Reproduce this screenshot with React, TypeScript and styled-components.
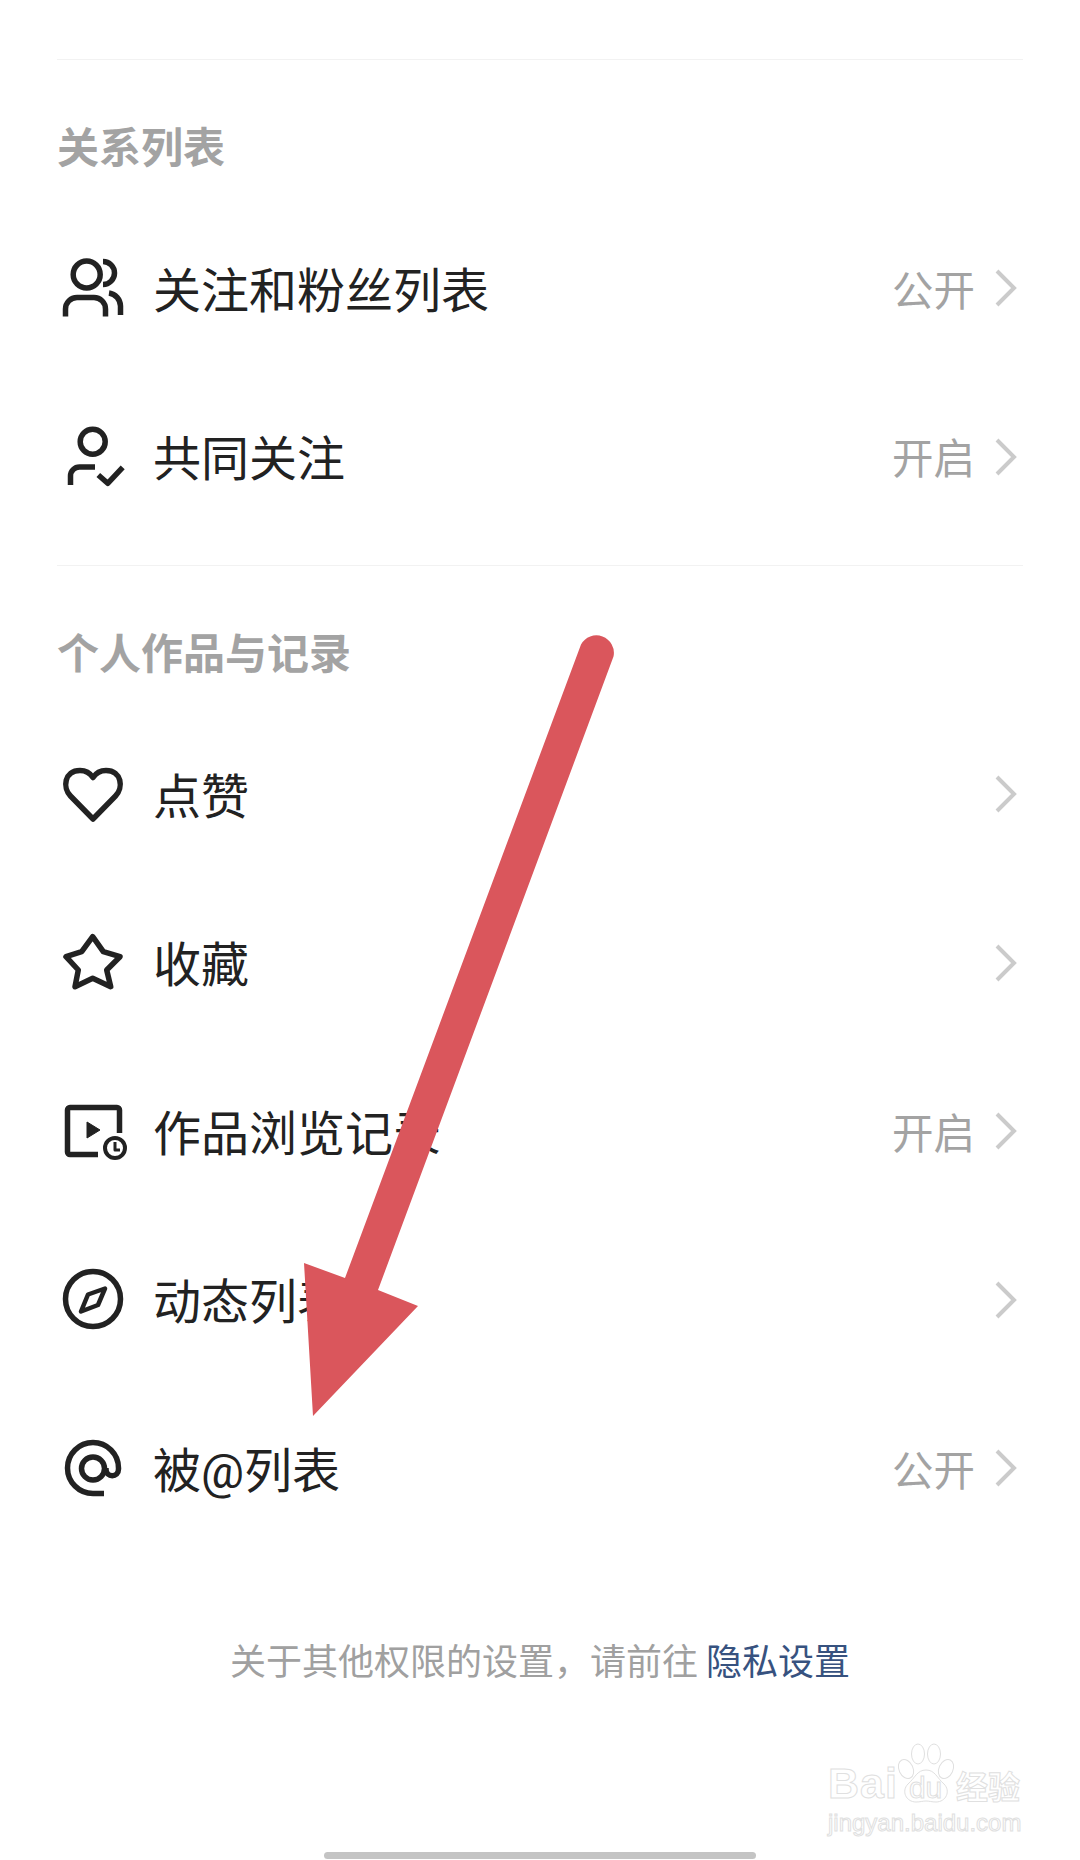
import React from "react";
import styled, { createGlobalStyle } from "styled-components";

const GlobalStyle = createGlobalStyle`
  html, body {
    margin: 0;
    padding: 0;
    background: #fff;
  }
  body {
    font-family: "Noto Sans CJK SC", "Liberation Sans", sans-serif;
  }
`;

const UsersIcon = () => (
  <Icon viewBox="0 0 72 72">
    <circle cx="30.7" cy="22.5" r="13.5" />
    <path d="M47 9.5a11.5 11.5 0 0 1 0 23" />
    <path d="M9.5 64.5V57A11.5 11.5 0 0 1 21 45.5h17A11.5 11.5 0 0 1 49.5 57v7.5" />
    <path d="M53 41a13.5 13.5 0 0 1 11.5 13v9" />
  </Icon>
);

const MutualIcon = () => (
  <Icon viewBox="0 0 72 72">
    <circle cx="36.7" cy="20.7" r="12.5" />
    <path d="M14.5 64v-9a9 9 0 0 1 9-9H39" />
    <path d="M42.3 54l9.4 8.3 15-16" />
  </Icon>
);

const HeartIcon = () => (
  <Icon viewBox="0 0 72 72">
    <path d="M37 61L14.500 38C6.500 30 8 12.500 24 12.500c6 0 10 2.500 13 7 3-4.500 7-7 13-7 16 0 17.500 17.500 9.500 25.500z" />
  </Icon>
);

const StarIcon = () => (
  <Icon viewBox="0 0 72 72">
    <path d="M36.700 9.700L47.300 24.700 64 29.700 50.700 43 54.700 59.700 36.700 51.300 19 59.700 22.300 43 10 29.700 25.700 24.700z" />
  </Icon>
);

const HistoryIcon = () => (
  <Icon viewBox="0 0 72 72">
    <path d="M63.500 38V15A2.500 2.500 0 0 0 61 12.500H14A2.500 2.500 0 0 0 11.500 15v42a2.500 2.500 0 0 0 2.500 2.500h28" />
    <path d="M31 27l13 8-13 8z" fill="#222" strokeWidth="1" />
    <circle cx="59" cy="53" r="10" strokeWidth="4" />
    <path d="M59 47v8h5" strokeWidth="3" />
  </Icon>
);

const CompassIcon = () => (
  <Icon viewBox="0 0 72 72">
    <circle cx="37" cy="35" r="27.500" />
    <path d="M49 24.500L42 41 25 47.500 32 30.500z" strokeWidth="4.500" />
  </Icon>
);

const AtIcon = () => (
  <Icon viewBox="0 0 72 72">
    <path d="M48 61.500H37A25.500 25.500 0 1 1 62.500 36v1c0 9-12.500 9-12.500 0v-1" />
    <circle cx="37" cy="36.500" r="11.500" />
  </Icon>
);

const Chevron = () => (
  <ChevronSvg viewBox="0 0 24 40">
    <path d="M3 3l17 17L3 37" />
  </ChevronSvg>
);

type RowData = { icon: React.ReactNode; label: string; value?: string };

const relationRows: RowData[] = [
  { icon: <UsersIcon />, label: "关注和粉丝列表", value: "公开" },
  { icon: <MutualIcon />, label: "共同关注", value: "开启" },
];

const workRows: RowData[] = [
  { icon: <HeartIcon />, label: "点赞" },
  { icon: <StarIcon />, label: "收藏" },
  { icon: <HistoryIcon />, label: "作品浏览记录", value: "开启" },
  { icon: <CompassIcon />, label: "动态列表" },
  { icon: <AtIcon />, label: "被@列表", value: "公开" },
];

const SettingRow = ({ icon, label, value }: RowData) => (
  <Row>
    {icon}
    <Label>{label}</Label>
    {value && <Value>{value}</Value>}
    <Chevron />
  </Row>
);

const App = () => {
  return (
    <Page>
      <GlobalStyle />
      <Section>
        <SectionTitle>关系列表</SectionTitle>
        {relationRows.map((row) => (
          <SettingRow key={row.label} {...row} />
        ))}
      </Section>
      <Section>
        <SectionTitle>个人作品与记录</SectionTitle>
        {workRows.map((row) => (
          <SettingRow key={row.label} {...row} />
        ))}
      </Section>
      <Footer>
        关于其他权限的设置，请前往 <FooterLink>隐私设置</FooterLink>
      </Footer>
      <HomeBar />

      <Arrow viewBox="296 630 330 800">
        <path d="M345 1278L581 644.500A17.500 17.500 0 0 1 613.500 656.500L378 1290 418 1306 313 1416 304 1263z" />
      </Arrow>

      <Watermark>
        <LogoLine>
          <Brand>Bai</Brand>
          <Paw>
            <svg viewBox="0 0 60 66" width="60" height="66">
              <ellipse cx="10" cy="27" rx="7" ry="10" transform="rotate(-25 10 27)" />
              <ellipse cx="22" cy="12" rx="6.500" ry="10" />
              <ellipse cx="38" cy="12" rx="6.500" ry="10" />
              <ellipse cx="50" cy="27" rx="7" ry="10" transform="rotate(25 50 27)" />
              <path d="M30 28c9 0 11 8 18 14 7 7 2 18-8 18-4 0-7-1-10-1s-6 1-10 1c-10 0-15-11-8-18 7-6 9-14 18-14z" />
            </svg>
            <PawText>du</PawText>
          </Paw>
          <BrandCn>经验</BrandCn>
        </LogoLine>
        <Domain>jingyan.baidu.com</Domain>
      </Watermark>
    </Page>
  );
};

export default App;

const Page = styled.div`
  position: relative;
  display: flex;
  flex-direction: column;
  width: 1080px;
  height: 1860px;
  padding: 0 57px;
  box-sizing: border-box;
  overflow: hidden;
  background: #fff;
`;
const Section = styled.section`
  border-top: 1px solid #f2f2f2;
  &:first-child {
    margin-top: 59px;
  }
  & + & {
    margin-top: 23px;
  }
`;
const SectionTitle = styled.h2`
  margin: 0;
  padding-top: 55px;
  height: 90px;
  font-size: 42px;
  line-height: 60px;
  font-weight: 700;
  color: #a3a3a3;
`;
const Row = styled.div`
  display: flex;
  align-items: center;
  height: 168.5px;
`;
const Icon = styled.svg`
  flex: none;
  width: 72px;
  height: 72px;
  margin: -2px 25px 0 -1px;
  fill: none;
  stroke: #222;
  stroke-width: 5.500;
  stroke-linejoin: round;
`;
const Label = styled.span`
  flex: 1;
  margin-top: 5px;
  font-family: Roboto, "Noto Sans CJK SC", sans-serif;
  font-size: 48px;
  line-height: 60px;
  color: #222;
`;
const Value = styled.span`
  margin-top: -3px;
  font-size: 41.500px;
  line-height: 60px;
  color: #a3a3a3;
`;
const ChevronSvg = styled.svg`
  flex: none;
  width: 24px;
  height: 40px;
  margin: -2px 5px 0 19px;
  fill: none;
  stroke: #cbcbcb;
  stroke-width: 4;
`;
const Footer = styled.div`
  margin-top: 83px;
  text-align: center;
  font-size: 36px;
  line-height: 44px;
  color: #a0a0a0;
`;
const FooterLink = styled.span`
  color: #37527f;
`;
const HomeBar = styled.div`
  margin: auto auto 1px;
  width: 432px;
  height: 7px;
  border-radius: 4px;
  background: #c4c4c4;
`;
const Arrow = styled.svg`
  position: absolute;
  left: 296px;
  top: 630px;
  width: 330px;
  height: 800px;
  fill: #da565c;
`;
const Watermark = styled.div`
  position: absolute;
  left: 828px;
  top: 1744px;
  width: 194px;
  color: transparent;
  -webkit-text-stroke: 1px #e0e0e0;
`;
const LogoLine = styled.div`
  display: flex;
  align-items: flex-end;
  height: 64px;
`;
const Brand = styled.span`
  font-family: "Liberation Sans", sans-serif;
  font-weight: 700;
  font-size: 43px;
  line-height: 50px;
  letter-spacing: 1px;
`;
const Paw = styled.div`
  position: relative;
  width: 60px;
  height: 66px;
  flex: none;
  margin: 0 0 0 -2px;
  svg {
    display: block;
    fill: #fff;
    stroke: #e0e0e0;
    stroke-width: 1;
  }
`;
const PawText = styled.span`
  position: absolute;
  left: 13px;
  bottom: 6px;
  font-family: "Liberation Sans", sans-serif;
  font-size: 30px;
  line-height: 28px;
`;
const BrandCn = styled.span`
  font-weight: 700;
  font-size: 32px;
  line-height: 46px;
  white-space: nowrap;
`;
const Domain = styled.div`
  font-family: "Liberation Sans", sans-serif;
  font-size: 24px;
  line-height: 30px;
  white-space: nowrap;
`;
